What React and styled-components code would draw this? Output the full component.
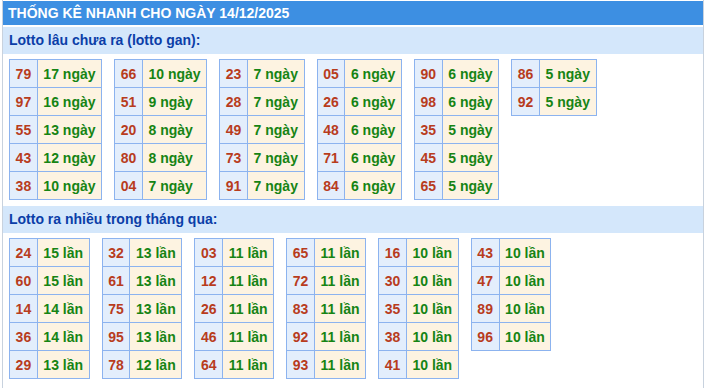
import React from "react";
import styled, { createGlobalStyle } from "styled-components";

const GlobalStyle = createGlobalStyle`
  body {
    margin: 0;
    background: #fff;
    font-family: "Liberation Sans", Arial, sans-serif;
  }
`;

const Box = styled.div`
  margin-left: 2px;
  width: 702px;
  min-height: 100vh;
  border-left: 1px solid #c8d2de;
  border-right: 1px solid #c8d2de;
  padding-top: 1px;
  box-sizing: border-box;
`;

const Title = styled.div`
  height: 24px;
  line-height: 25px;
  padding-left: 5px;
  background: #3d8fe2;
  color: #fff;
  font-weight: bold;
  font-size: 14px;
  text-transform: uppercase;
`;

const SubTitle = styled.div`
  margin-top: ${(p) => p.$top || 0}px;
  height: 27px;
  line-height: 27px;
  padding-left: 6px;
  background: #d4e7fb;
  color: #0b3ea8;
  font-weight: bold;
  font-size: 14px;
`;

const TableList = styled.div`
  display: flex;
  flex-wrap: wrap;
  align-items: flex-start;
  gap: 12px;
  padding: 5px 6px 6px;
`;

const NumTable = styled.table`
  border-collapse: collapse;
  font-size: 14px;
  font-weight: bold;

  td {
    border: 1px solid #8cb3ef;
    height: 28px;
    padding: 0 5.6px;
    box-sizing: border-box;
  }
`;

const NumCell = styled.td`
  background: #e3eefc;
  color: #b83c1d;
  text-align: center;
`;

const CountCell = styled.td`
  background: #fdf3e1;
  color: #168414;
`;

const gan = [
  [["79", 17], ["97", 16], ["55", 13], ["43", 12], ["38", 10]],
  [["66", 10], ["51", 9], ["20", 8], ["80", 8], ["04", 7]],
  [["23", 7], ["28", 7], ["49", 7], ["73", 7], ["91", 7]],
  [["05", 6], ["26", 6], ["48", 6], ["71", 6], ["84", 6]],
  [["90", 6], ["98", 6], ["35", 5], ["45", 5], ["65", 5]],
  [["86", 5], ["92", 5]],
];

const nhieu = [
  [["24", 15], ["60", 15], ["14", 14], ["36", 14], ["29", 13]],
  [["32", 13], ["61", 13], ["75", 13], ["95", 13], ["78", 12]],
  [["03", 11], ["12", 11], ["26", 11], ["46", 11], ["64", 11]],
  [["65", 11], ["72", 11], ["83", 11], ["92", 11], ["93", 11]],
  [["16", 10], ["30", 10], ["35", 10], ["38", 10], ["41", 10]],
  [["43", 10], ["47", 10], ["89", 10], ["96", 10]],
];

const Group = ({ groups, unit }) => (
  <TableList>
    {groups.map((rows, i) => (
      <NumTable key={i}>
        <tbody>
          {rows.map(([num, count]) => (
            <tr key={num}>
              <NumCell>{num}</NumCell>
              <CountCell>
                {count} {unit}
              </CountCell>
            </tr>
          ))}
        </tbody>
      </NumTable>
    ))}
  </TableList>
);

const App = () => (
  <Box>
    <GlobalStyle />
    <Title>Thống kê nhanh cho ngày 14/12/2025</Title>
    <SubTitle $top={2}>Lotto lâu chưa ra (lotto gan):</SubTitle>
    <Group groups={gan} unit="ngày" />
    <SubTitle>Lotto ra nhiều trong tháng qua:</SubTitle>
    <Group groups={nhieu} unit="lần" />
  </Box>
);

export default App;
